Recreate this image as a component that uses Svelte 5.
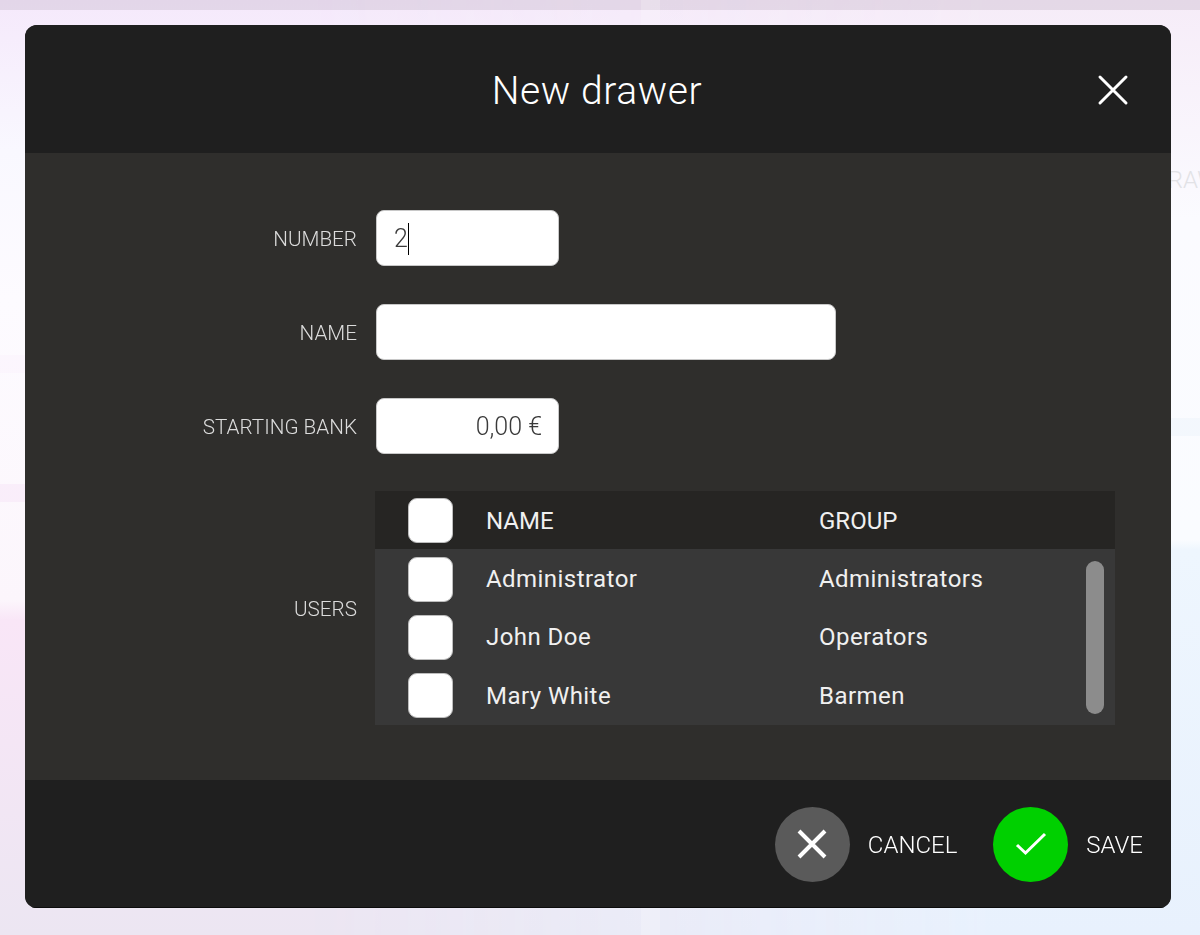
<script>
  const users = [
    { name: 'Administrator', group: 'Administrators' },
    { name: 'John Doe', group: 'Operators' },
    { name: 'Mary White', group: 'Barmen' }
  ];
</script>

<div class="backdrop">
  <div class="topbar"></div>
  <div class="divider"></div>
  <div class="band band-a"></div>
  <div class="band band-b"></div>
  <div class="band band-c"></div>
  <span class="behind">DRAWERS</span>
</div>

<div class="page">
  <section class="modal">
    <header class="modal-head">
      <h1>New drawer</h1>
      <button class="close" aria-label="Close">
        <svg width="32" height="32" viewBox="0 0 32 32">
          <path d="M3 3 L29 29 M29 3 L3 29" stroke="#fff" stroke-width="3" stroke-linecap="round" />
        </svg>
      </button>
    </header>

    <div class="modal-body">
      <div class="form">
        <span class="label">NUMBER</span>
        <div class="field short">2<span class="caret"></span></div>

        <span class="label">NAME</span>
        <div class="field wide"></div>

        <span class="label">STARTING BANK</span>
        <div class="field short money">0,00 €</div>

        <span class="label">USERS</span>
        <div class="table">
          <div class="row head">
            <span class="check"></span>
            <span class="cell">NAME</span>
            <span class="cell">GROUP</span>
          </div>
          <div class="rows">
            {#each users as user}
              <div class="row">
                <span class="check"></span>
                <span>{user.name}</span>
                <span>{user.group}</span>
              </div>
            {/each}
          </div>
          <div class="scrollbar"></div>
        </div>
      </div>
    </div>

    <footer class="modal-foot">
      <button class="action">
        <span class="round grey">
          <svg width="32" height="32" viewBox="0 0 32 32">
            <path d="M3 3 L29 29 M29 3 L3 29" stroke="#fff" stroke-width="4" stroke-linecap="butt" />
          </svg>
        </span>
        <span class="action-text">CANCEL</span>
      </button>
      <button class="action">
        <span class="round green">
          <svg width="34" height="28" viewBox="0 0 34 28">
            <path d="M3 15 L11.5 23 L31 4" fill="none" stroke="#fff" stroke-width="3" />
          </svg>
        </span>
        <span class="action-text">SAVE</span>
      </button>
    </footer>
  </section>
</div>

<style>
  :global(body) {
    margin: 0;
    font-family: Roboto, "Liberation Sans", sans-serif;
    overflow: hidden;
  }

  .backdrop {
    position: fixed;
    inset: 0;
    overflow: hidden;
    background:
      linear-gradient(to bottom, #f5e9fb 0, #f9f8ff 150px, #fdfbff 300px, #fcf6fc 600px, #f9e6f7 620px, #ece6f2 935px);
  }

  .backdrop::after {
    content: "";
    position: absolute;
    inset: 0;
    background:
      linear-gradient(to bottom, #f6ecf8 0, #fbfbff 220px, #fafcff 540px, #eef6fe 550px, #e8f1fd 935px);
    -webkit-mask-image: linear-gradient(to right, transparent 300px, #000 1000px);
    mask-image: linear-gradient(to right, transparent 300px, #000 1000px);
  }

  .topbar {
    position: absolute;
    z-index: 1;
    top: 0;
    left: 0;
    right: 0;
    height: 10px;
    background: rgba(120, 100, 130, 0.14);
  }

  .divider {
    position: absolute;
    z-index: 2;
    top: 0;
    bottom: 0;
    left: 641px;
    width: 19px;
    background: rgba(255, 255, 255, 0.2);
  }

  .band {
    position: absolute;
    z-index: 1;
    height: 18px;
    background: rgba(230, 190, 235, 0.06);
  }

  .band-a { left: 0; width: 30px; top: 355px; }
  .band-b { left: 0; width: 30px; top: 484px; background: rgba(230, 170, 235, 0.13); }
  .band-c { right: 0; width: 30px; top: 418px; background: rgba(190, 215, 240, 0.1); }

  .behind {
    position: absolute;
    z-index: 1;
    left: 1152px;
    top: 166px;
    font-size: 24px;
    font-weight: 300;
    color: #e2e2e6;
    white-space: nowrap;
  }

  .page {
    position: relative;
    z-index: 3;
    padding: 25px 29px 27px 25px;
  }

  .modal {
    display: flex;
    flex-direction: column;
    height: 883px;
    border-radius: 12px;
    overflow: hidden;
    background: #2f2e2c;
    color: #fff;
  }

  .modal-head {
    display: flex;
    align-items: center;
    justify-content: center;
    height: 128px;
    flex-shrink: 0;
    background: #1f1f1f;
    position: relative;
  }

  h1 {
    margin: 5px 0 0 -2px;
    font-size: 39px;
    font-weight: 300;
    line-height: 1;
    letter-spacing: 0.6px;
  }

  .close {
    position: absolute;
    top: 49px;
    right: 42px;
    padding: 0;
    display: flex;
    background: none;
    border: none;
  }

  .modal-body {
    flex: 1;
    padding-top: 57px;
  }

  .form {
    display: grid;
    grid-template-columns: 332px 740px;
    column-gap: 18px;
    row-gap: 38px;
    align-items: center;
  }

  .label {
    padding-top: 2px;
    text-align: right;
    font-size: 20.7px;
    font-weight: 300;
    color: #dcdcdc;
  }

  .field {
    box-sizing: border-box;
    height: 56px;
    margin-left: 1px;
    display: flex;
    align-items: center;
    padding: 1px 16px 0 17px;
    background: #fff;
    border: 1px solid #c8c8c8;
    border-radius: 8px;
    color: #3a3a3a;
    font-size: 25px;
    font-weight: 300;
  }

  .short { width: 183px; }
  .wide { width: 460px; }
  .money { justify-content: flex-end; }

  .caret {
    width: 1px;
    height: 32px;
    background: #000;
  }

  .table {
    position: relative;
    margin-top: -1px;
    background: #383838;
  }

  .rows {
    padding-top: 1px;
  }

  .row {
    display: grid;
    grid-template-columns: 111px 333px 1fr;
    align-items: center;
    height: 58.33px;
    font-size: 24px;
    font-weight: 400;
    letter-spacing: 0.45px;
    color: #f0f0f0;
  }

  .row.head {
    height: 58px;
    background: #262523;
    letter-spacing: 0;
  }

  .cell {
    padding-top: 2px;
  }

  .check {
    box-sizing: border-box;
    width: 45px;
    height: 45px;
    margin-left: 33px;
    background: #fff;
    border: 1px solid #bdbdbd;
    border-radius: 9px;
  }

  .scrollbar {
    position: absolute;
    top: 70px;
    right: 11px;
    width: 18px;
    height: 153px;
    border-radius: 9px;
    background: #8c8c8c;
  }

  .modal-foot {
    box-sizing: border-box;
    display: flex;
    justify-content: flex-end;
    align-items: center;
    gap: 36px;
    height: 128px;
    flex-shrink: 0;
    padding: 1px 28px 0 0;
    background: #1f1f1f;
    border-bottom: 1px solid #0c0c0c;
  }

  .action {
    display: flex;
    align-items: center;
    gap: 18px;
    padding: 0;
    background: none;
    border: none;
    color: #fff;
    font-family: inherit;
    font-size: 24px;
    font-weight: 300;
  }

  .action-text {
    padding-top: 2px;
  }

  .round {
    display: flex;
    align-items: center;
    justify-content: center;
    width: 75px;
    height: 75px;
    border-radius: 50%;
  }

  .grey { background: #5a5a5a; }
  .green { background: #00d000; }
</style>
